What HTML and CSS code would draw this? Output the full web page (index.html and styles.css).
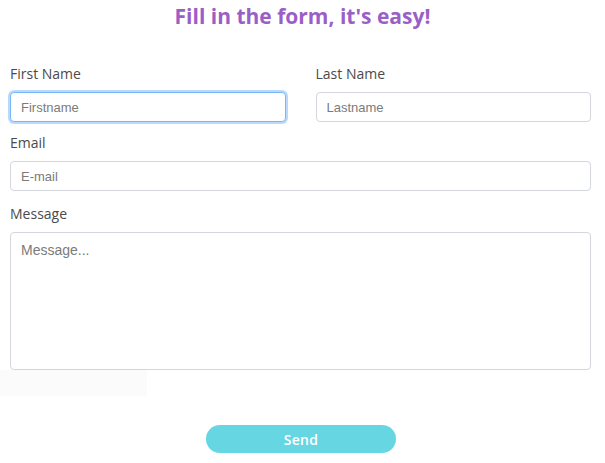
FILE: index.html
```html
<!DOCTYPE html>
<html lang="en">
<head>
<meta charset="utf-8">
<title>Form</title>
<link rel="stylesheet" href="styles.css">
</head>
<body>
<main class="page">
  <h1 class="title">Fill in the form, it's easy!</h1>
  <form class="form">
    <div class="row">
      <div class="field">
        <label class="label" for="fn">First Name</label>
        <input class="input focused" id="fn" type="text" placeholder="Firstname">
      </div>
      <div class="field">
        <label class="label" for="ln">Last Name</label>
        <input class="input" id="ln" type="text" placeholder="Lastname">
      </div>
    </div>
    <div class="field">
      <label class="label" for="em">Email</label>
      <input class="input" id="em" type="text" placeholder="E-mail">
    </div>
    <div class="field message">
      <label class="label" for="msg">Message</label>
      <textarea class="input area" id="msg" placeholder="Message..."></textarea>
    </div>
    <div class="shade"></div>
    <div class="actions">
      <button type="button" class="send">Send</button>
    </div>
  </form>
</main>
</body>
</html>
```
FILE: styles.css
```css
* { box-sizing: border-box; }
html, body { margin: 0; background: #fff; }
.page {
  width: 605px;
  font-family: "Open Sans", "Liberation Sans", sans-serif;
}
.title {
  margin: 0;
  padding-top: 4px;
  height: 26px;
  line-height: 24px;
  text-align: center;
  font-size: 21px;
  font-weight: 700;
  color: #9a5fc7;
}
.form {
  display: flex;
  flex-direction: column;
  padding: 38px 14px 0 10px;
}
.row {
  display: flex;
  gap: 30px;
}
.row .field { flex: 1; }
.field {
  display: flex;
  flex-direction: column;
  margin-bottom: 11px;
}
.message { margin-top: 2px; }
.label {
  display: block;
  height: 20px;
  line-height: 20px;
  font-size: 14px;
  color: #4a4a4a;
  margin-bottom: 8px;
}
.input {
  display: block;
  width: 100%;
  height: 30px;
  border: 1px solid #d3d6dc;
  border-radius: 4px;
  padding: 0 10px;
  font-family: "Liberation Sans", Arial, sans-serif;
  font-size: 13px;
  color: #333;
  background: #fff;
  outline: none;
}
.input::placeholder { color: #7b7b7b; }
.focused {
  border-color: #7ab8f5;
  box-shadow: 0 0 0 2px #b9dafc;
}
.area {
  height: 138px;
  resize: none;
  padding: 9px 10px;
  font-size: 14px;
}
.shade {
  margin: -11px 0 0 -10px;
  width: 147px;
  height: 26px;
  background: #fbfbfb;
}
.actions {
  display: flex;
  justify-content: center;
  padding-top: 29px;
  padding-left: 1px;
}
.send {
  width: 190px;
  height: 28px;
  border: none;
  border-radius: 14px;
  background: #67d6e3;
  color: #fff;
  font-family: "Open Sans", "Liberation Sans", sans-serif;
  font-size: 14px;
  font-weight: 600;
  letter-spacing: 0.3px;
}
```
